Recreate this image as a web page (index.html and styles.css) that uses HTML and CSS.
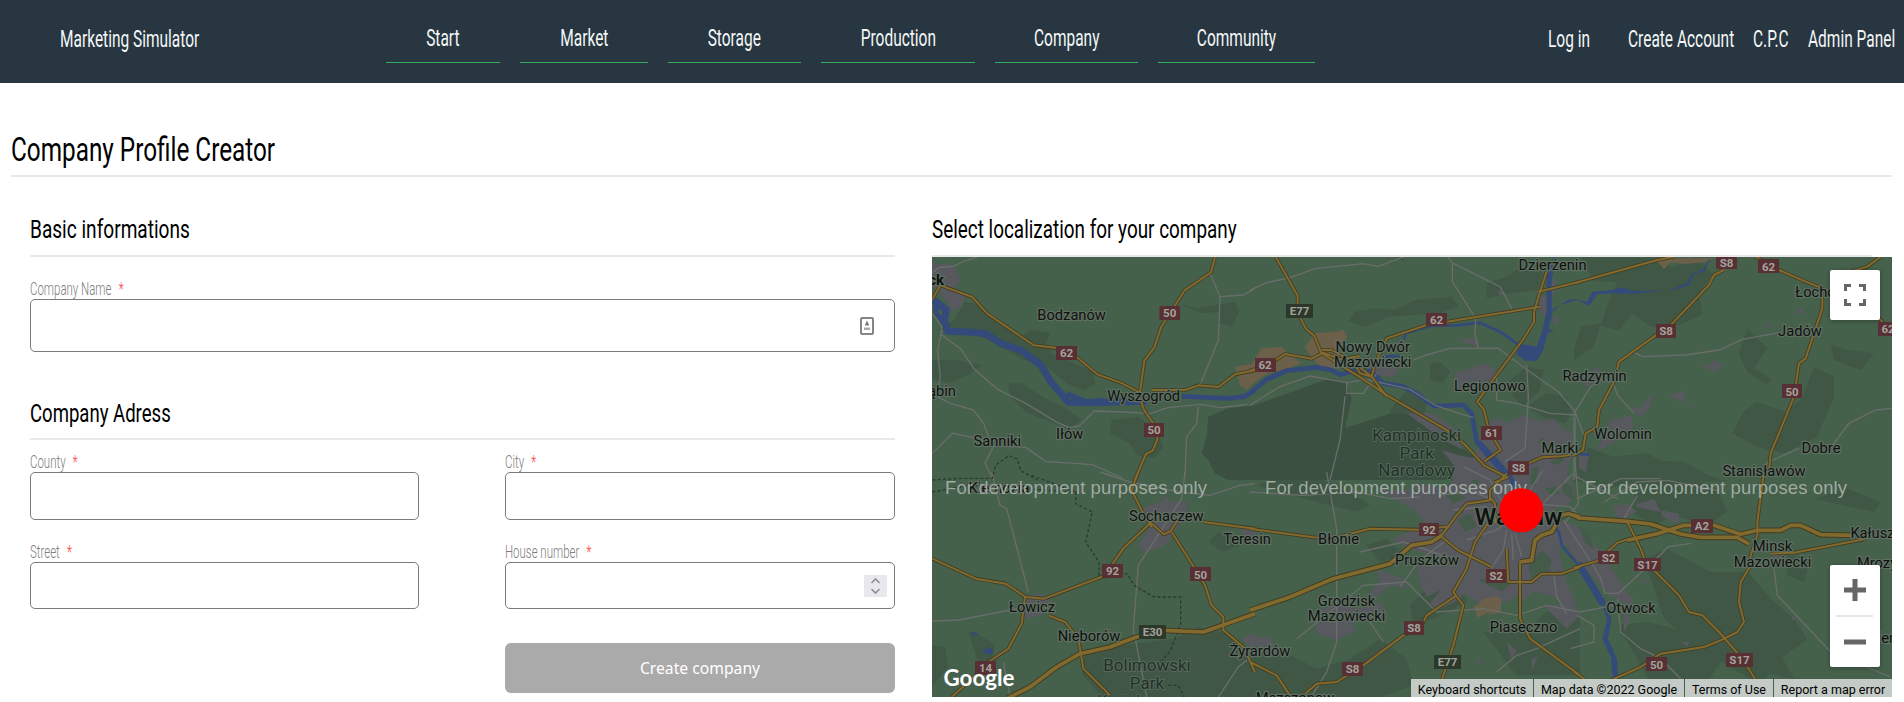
FILE: index.html
```html
<!DOCTYPE html>
<html lang="en">
<head>
<meta charset="utf-8">
<title>Marketing Simulator</title>
<link rel="stylesheet" href="styles.css">
</head>
<body>
<header class="topbar">
  <a class="brand"><span class="cond">Marketing Simulator</span></a>
  <nav class="menu">
    <a class="menu-link start"><span class="cond">Start</span></a>
    <a class="menu-link market"><span class="cond">Market</span></a>
    <a class="menu-link storage"><span class="cond">Storage</span></a>
    <a class="menu-link production"><span class="cond">Production</span></a>
    <a class="menu-link company"><span class="cond">Company</span></a>
    <a class="menu-link community"><span class="cond">Community</span></a>
  </nav>
  <div class="account">
    <a class="login"><span class="cond">Log in</span></a>
    <a class="register"><span class="cond">Create Account</span></a>
    <a class="cpc"><span class="cond">C.P.C</span></a>
    <a class="admin"><span class="cond">Admin Panel</span></a>
  </div>
</header>
<main class="page">
  <h1 class="title"><span class="cond">Company Profile Creator</span></h1>
  <div class="columns">
    <form class="form">
      <h2 class="section"><span class="cond">Basic informations</span></h2>
      <div class="field name-field">
        <label><span class="cond">Company Name<b>*</b></span></label>
        <div class="input tall">
          <svg class="card-icon" width="16" height="20" viewBox="0 0 16 20"><rect x="2" y="2" width="12" height="16" rx="1" fill="#fff" stroke="#858585" stroke-width="2"/><path d="M8 4.500l1.200 2.500 1 2.600H5.800l1-2.600z" fill="#777"/><path d="M5 11.500h6v2.500H5z" fill="#aaa"/></svg>
        </div>
      </div>
      <h2 class="section address"><span class="cond">Company Adress</span></h2>
      <div class="grid">
        <div class="field"><label><span class="cond">County<b>*</b></span></label><div class="input"></div></div>
        <div class="field"><label><span class="cond">City<b>*</b></span></label><div class="input"></div></div>
        <div class="field"><label><span class="cond">Street<b>*</b></span></label><div class="input short"></div></div>
        <div class="field"><label><span class="cond">House number<b>*</b></span></label><div class="input short">
          <svg class="spinner" width="23" height="22" viewBox="0 0 23 22"><path d="M0 0h23v22H0z" fill="#e9e9ed"/><path d="M7.500 8l4-4 4 4M7.500 14l4 4 4-4" fill="none" stroke="#8f8f9d" stroke-width="1.600"/></svg>
        </div></div>
      </div>
      <button class="submit" type="button">Create company</button>
    </form>
    <section class="place">
      <h2 class="section map-head"><span class="cond">Select localization for your company</span></h2>
      <div class="map">
        <svg class="canvas" width="960" height="440" viewBox="932 257 960 440">
          <rect x="932" y="257" width="960" height="440" fill="#45604b"/>
          <g class="forest">
            <path class="ta" d="M120 155l50 10 10 25 70 45 40 22 30-18 57 9-15 35 20 30 60 25 60 25 10 40-35 18-50-20-60-50-80-25-60-40-80-35-50-15-60 5 50-30zM760 160l60 15 110-20 12 30-20 45-40-10 5-35-60 5zM250 400l40 0 70 45 60 28 50 35-35 30-50-20-80-30-50-50zM560 510l80-10 60 45 15 50-30 30-50-10-20-35-60-30zM20 330l70 0 80 15-40 30-60 25-50-15z"/>
            <path class="tb" d="M290 220l25-35 60-10 60 5 60-30 110-10 20 30-60 20-150 10-70 30-50-15zM710 100l60-20 50-30 60 20-20 50-80 10-70 15zM540 340l30-5 30 30-20 35-40-10zM420 480l60-70 50 50-10 50-100 0zM440 20l25 0-5 15zM770 400l60-50 50 10-10 60-50 50-30-30z"/>
            <path class="tc" d="M20 22l225 0 50 30 70-30 50 50-40 60 10 60-60 30-90 10-60-40-40 50-55-15 20-60 30-70-70-5zM520 235l60 60-40 60 50 30-10 20-60-40-25-50zM770 285l50 15 80 10-40 50-80-30zM720 350l60 30 0 60-30 70-20 50-100 50-80-20-75-40 30-60 40-35 90 30 50-40zM20 600l70 60 120-30 120 5 70 40 60 20H0V590zM0 300l20-70 60-10-20 70-60 40z"/>
            <path class="td" d="M130 480l20 0 60 40-10 60-40-10-20-60zM20 520l40 5 10 60-50 60zM480 550l120-30 150-20 70-35 90 20 80 80v110H530l-60-70zM880 180l40 0 30 40-60 20-40-30z"/>
            <path class="te" d="M0 520l100 20 100 50 100-30 90-60 80 60 20 80-100 35H0zM480 400l60-60 90 0 20 50-100 50-60 10zM700 480l120 0 70-60 100 10v180H800zM20 40l110-40 140 40 90 60-40 20-120-30zM350 220l60-20 50 50-70 20z"/>
            <path class="tf" d="M190 20l130-20 110 50 30 70-60 40-100-30-60 30-70-40zM210 260l70-30 130 70 110 0 80 90 60 50 40 60-80 60-60 80-100-60-90-60-100-80zM130 460l90-10 120 30 100 90-40 60-170 0zM640 250l70 10-20 70-50-20zM720 80l100-30 100 40-20 30zM560 540l60 10 40 70-100-20z"/>
            <path class="tw" d="M380 80l60-40 60 10 15 50-20 30-60-15zM560 200l80 30 100-10 100 50v60l-100-30-140 30-40-40z"/>
          </g>
          <g class="park">
            <path class="ta" d="M850 500l60-25 80-8v223H910l-40-20-20-40-20-20 15-50z"/>
            <path class="tb" d="M0 470l100-35 140-50 45 10 20 50-20 90 60-20 80-25 60 5 60 30 90 65 70 60 40 40H0z"/>
          </g>
          <g class="urban">
            <path class="ta" d="M20 22l15 25 30-8 25 15 18 36-22 25 34 20-8 35-30 12-30-45-32-30z"/>
            <path class="tb" d="M615 370l90-30 40 25-10 40-65 20-60-10zM350 340l50 0 50 20-20 20-60-5zM740 120l30 10-20 10zM620 270l60-5 10 25-40-10zM870 140l22 0-5 60-20-15zM905 90l15-8-6 40-10 30zM910 190l20 15-20 25zM470 490l80 0 70 50 20 60-60-30z"/>
            <path class="tc" d="M10 390l60-40 20 30-50 30zM110 510l60-15 10 35-50 40-60 35 20-60zM170 475l30-5 40-45-10 40-30 40zM285 435l50-15-10 40zM380 345l30 0 5-15 35 15-30 20zM655 190l35-20-5 20zM575 220l20 5-15 10zM15 600l30 10-10 60-20-20zM330 465l50 3-30 0z"/>
            <path class="td" d="M650 110l50-20 90 0-10 50-20 20-20 30-25 35-60 15-15-20 40-65zM300 370l50-5 30 25-30 40-60 10zM710 70l25 15 5 30-20-10zM950 500l40-20v60zM940 170l50 0v25l-20 10z"/>
            <path class="te" d="M500 280l45-5-3 60-30 10zM390 330l-30 30 10 20 50-40 50 10-10-30-80-30zM190 420l60-20 80 10 60-20 20 35-60 20-50 10 20 20-60 30-60-20zM490 30l110 25-20 40-70-20zM770 510l30 25-15 30zM845 560l20-5-20 40zM680 560l15 10-15 10zM0 490l60 10 40 40-50 20zM880 400l90 0 20 30-40 40z"/>
            <path class="tf" d="M180 100l60-20 20 40-50-10zM260 115l55 10 0 30-50-20zM200 325l30-5-20 15zM150 410l20 30-20 40zM320 510l25 0-5 15zM590 240l30 0 0 35-20 0zM650 430l20 10-15 5z"/>
            <path class="tw" d="M255 130l40-15 25 15 55-25 50 20 35-10 30 30 25 10 5 50-20 70 25 60-20 40-40 10 0 30 60 20 60 60 45 60 50 80 25 25-20 15-60-30-45-55-60-60-25-40-20 20 25 100 30 60-30 20-40-40-60-15-30 30-20-15-40 20-25-15-50 15-40-30-20 20-60 30-25-20 35-45-40-45 10-50-80-30-40-20 60-30 40-20-30-40-70-35-40-25 100 0 60 10 60-30 10-50-40-50 50 15 45 10zM155 270l35-15 30 20-10 30-50-10zM640 380l40-10 30 25-40 25-20-10zM60 610l60-20 20 30-60 30z"/>
          </g>
          <g class="forest light">
            <path class="tw" d="M450 245l40-15 0 15-25 10zM485 300l30 20 5 40-30-20zM435 325l30-5 15 20-30 5zM395 265l20-5-10 60-15-10zM415 190l10-20 15 15zM130 340l40-5 30 20-40 15zM170 420l40-20 20 40-35 15zM385 560l40-50 30 30-10 40-50 20zM160 400l30-10 0 15zM215 300l25 0-15 20zM540 440l30 20 10 50-30-30zM235 600l60-10 40 15-30 30z"/>
          </g>
          <g class="quarry">
            <path class="ta" d="M930 350l60-10v55l-25 25-20-15z"/>
            <path class="tb" d="M0 350l35-55 60-5 20 20 40 30-40 15-60 15-55 35zM165 290l30-40 65-5 20-5 12 20-30 35 30 30-20 30-50 5-40-40z"/>
            <path class="tc" d="M240 25l180 0-30 12-60 5-40-5-20 20z"/>
            <path class="te" d="M672 405l30-25 40-8 12 10-2 40-30 5-10-5-30 15z"/>
          </g>
          <g class="water">
            <path class="tb" d="M800 280l60 10 18-50 12-60 0-100 20-58 10 0-15 66 0 110-10 40 18 4-20 8-15 54-18 28-35 0-25-20zM905 180l50-30 35-3-60 18-20 20z"/>
            <path class="tc" d="M0 148l40 7 15-30 60-5 25-8 35 10 100 0-100 9-50-1-55 2-10 15-15 20-30-15zM275 126l65-28 15-28 30-10 25-38-18 42-32 8-14 34z"/>
            <path class="td" d="M133 500l15-22 15 12-20 0zM170 540l20-15 15 10-5 14z"/>
            <path class="te" d="M435 228l25 8-20-5z"/>
            <path class="tf" d="M88 390l25 50-12 60 28 60 3 60H116l-5-65-26-55 15-60-18-45zM420 240l15 5zM680 560l20 12z"/>
          </g>
          <g class="river">
            <path class="ta" d="M26 150l38 30-6 30 10 34 60 2 55 5 45 30 60 20 60 45 30 50 52 60 60 2 175-4"/>
            <path class="ta narrow" d="M30 160l4 30 28 35M770 439l140 6 50-6 30-18M425 430l60 25 50-5"/>
            <path class="tb narrow" d="M0 430l50-42 60-26 90-10 45 8 25 14 50-14 45 5 35 35 60 10 40 20 50 38 90-3 25 25 15 85 50 60 45 45"/>
            <path class="tb thin" d="M460 270l8-20 72-22 80-2 70-8 60 27 50 35 45 15M400 320l50-2"/>
            <path class="tw narrow" d="M235 185l50 52 45 53 15 30"/>
            <path class="tw thin" d="M465 435l12 25 10 40 45 50M332 240v40M540 223h30"/>
            <path class="tw" d="M535 550l38 62 36 60"/>
          </g>
          <g class="minor">
            <path class="ta" d="M22 68l20-15 45-5 30-15 40-12M22 190l28 40-2 25-10 45 8 80-10 60 40 20 70 20 30 40 20 55M48 253l60 45 40 60 70 60 80 40 100 60 35 15 30-5 45-45 80 3 90 4 50-17 100-10 60 10 80-10M22 610l60-60 60 12 60 25 100 5 60 42 140 10 90 40M205 590l-25 50 25 50M855 70l30 70 70-5 35-20M885 140l-5 130-55 135M820 470l-5 50-30 40-5 120"/>
            <path class="tb" d="M0 120l50-22 70-15 75-27 145-15 45 8 80-30M595 22l12 18 0 55 70 110-2 50 10 40 60 0 80 60 100 70 50 60 30 80M610 40l140 70 35 65M490 330l40-15 70-20 85 0M0 465l90-55 90-32 110 20 60-10 130 30 80 50 60 20 50 15M830 345l5 100-10 150-60 40M290 400l0 30 50 0 40-60M285 440l-15 130-30 120M740 370l0 80 60 10 100 30 80 5"/>
            <path class="tc" d="M175 305l30 15 130-5 100-15 70-32 110-20M0 490l50-80 40-25 30 20 10 30 50 55M765 600l60-80 80-40 50-5M575 640l100-45M0 500v190"/>
            <path class="td" d="M200 0l25 100 20 10 65 250M22 447l80-3 180-35M525 0l90 30 150 30 90 10 90-30 45-5M780 0l-10 80-130 200-15 190 40 205M235 570l20 100M880 675l60-90 50-40"/>
            <path class="te" d="M0 60l160 10 160-10 100 20 90-5M230 0l30 170 0 340-30 90-50 80M330 240l130-30 90 30 50 20M140 500l200-160 130-10 90 90 140-10 100 20 90-30 100 20 100-20M360 450l40 60M740 600l60-50 60-20 130-60"/>
            <path class="tf" d="M0 10l130 70M10 80l130-60 120 0M90 90l100-60 90-5 150 30M10 430l50 30 0 50-70 20M130 380l10 100 60 50 60 30 60 60M600 290l10 80 160 170 180 75M150 140l40-70"/>
            <path class="tw" d="M525 110v130l10 130-40 60M120 345l100-10 70 30M160 390l100-10M200 480l90-30 40-30M270 570l40-60 10-60M340 540l-5-80M365 530l-20-70M330 410l-60-110-80-40M390 330l40-60M380 370l130 10 40 40M490 420l60 90 50 80 15 50 40 0 120-110 30-30 70-10M460 570l10 80 30 50M0 620l60-80 80-60M310 370l20-60M430 370l60-60 30-30"/>
          </g>
          <g class="border-line">
            <path class="ta" d="M22 690l80-5 30 0 70 0 10-40 40-28 25 10 10 35 50 28"/>
            <path class="td" d="M22 60l110-20 320 20 0 35 50 25-20 90 40 60 0 50 85-15 20 35 60 35 80 0 0 80-30 80-50 60M320 10l130 50M730 640l30 0 20 40"/>
          </g>
          <g class="roads" id="roads">
            <path class="ta" d="M22 148l24-42 96 35 45 50 140 95 100 12 90 75 70 25 58 30M870 22l-12 45-80 55-70 110-20 60-30 40-15 110 15 40 25 35 15 50-15 35-20 10-35 80M680 420l100 0 40-14 60 5 50-38 60-12"/>
            <path class="tb" d="M0 362l60-20 45-30 80 14 35-18 50 20 60-10M78 22l65 115 0 50 25 50 25 20 20 50 60 40 50 30 90 60 180 105 50 40 60 65 70 35-40 15M215 300l30 0 70 40 50 40 45 60M315 345l15 25 35 10 10-40 25-50 10-25 120-40 340-55M890 65l-20 60-18 60 0 30-30 50-90 120-50 70 20 25 15 60 35 60-50 35M990 95l-125 30M835 640l40-18 60-3 25-5"/>
            <path class="tc" d="M0 100l250-70 50-10M450 60l-30 15-15 30-110 115-160 115-15 60-45 85-5 50-35 20-8 50-32 18M545 20l70 40 80 35 50 20 0 60-50 150-20 15-15 100-70 170-5 55M770 110l60-45 50-15 40-30M900 190l54 55"/>
            <path class="td" d="M22 260l130 60 90 15 60 40 55 5 180-68 60-85 80-75 40 35 20-10 20-30M835 150l155 20M640 0l-20 55 30 60 30 50M740 180l70 110 30 50 20 60 35 35 0 40 60 50 35 75M300 375l-10 80-40 75-60 40-60 60-50 45M370 430l50 20 40 50 15 90 80 80"/>
            <path class="te" d="M0 170l190 26 60 2 110-28 150 3 90-10M575 195l50 40 40 20 60 30M770 5l-50 50 0 30-70 10-30 35-45 60M730 130l-55 80-25 80-40 70 30 40-30 120-40 120M620 370l-90 60-20 40-50 20-120 90-80 50-60 5-35 30M0 570l80 40 40 60M770 230l5 100 70 0 30-25 60 0 55-20M810 270l0 170 30 60 150 110M720 75l15 20 0 60"/>
            <path class="tf" d="M0 287l70-20 60-55 30-10M160 150l40 80 15 40 100 100 30 50 40 10 50 50 70 80 50 80 20 30M570 0l-20 150 0 40-20 60 0 30-30 50-5 60 15 60-20 30-50 25-50 20-130 20-60 40-90 40M0 600l30 20M590 245l70-3 210-40"/>
          </g>
          <g class="roads main" id="motorways">
            <path class="td" d="M245 680l70-35 80-60 70-40 90-20 80-30 80-20 120 5 70-25 85-30"/>
            <path class="te" d="M0 415l120-40 130-55 170-45 65-55 60-10 30-20M810 270l35-5 10-60 20-15 30-10 30-50 20-5 35 10"/>
            <path class="tf" d="M0 130l15 8 145 10 70 8 90 30 60 10 110 0 35 20M160 205l90-20 80-25 90 0 80 27 50-12 70 0 30-15 30 0 60 28 100 2"/>
          </g>
          <use href="#roads" class="core"/>
          <use href="#motorways" class="core wide"/>
          <g class="badges">
            <path class="red" d="M1159.500 306h20.500v14h-20.500zM1056 346h21v14h-21zM1144 423h20v14h-20zM1426 313h21v13h-21zM1255 358h21v14h-21zM1481 426h21v14h-21zM1508 461h21v14h-21zM1716 257h21v12h-21zM1758 259h21v14h-21zM1656 324h20v14h-20zM1878 322h20v14h-20zM1782 384h20v14h-20zM1102 564h21v14h-21zM1190 567h21v14h-21zM975 661h21v14h-21zM1419 523h20v13h-20zM1486 569h20v14h-20zM1404 621h20v14h-20zM1342 662h21v14h-21zM1691 519h22v14h-22zM1598 551h21v13h-21zM1634 558h27v13h-27zM1646 657h21v14h-21zM1726 653h27v14h-27z"/>
            <path class="dark" d="M1286 304h27v14h-27zM1139 625h27v14h-27zM1434 655h27v14h-27z"/>
            <text x="1169.700" y="317">50</text><text x="1066.500" y="357">62</text><text x="1154" y="434">50</text><text x="1299.500" y="315">E77</text><text x="1436.500" y="323.500">62</text><text x="1265" y="369">62</text><text x="1491.500" y="437">61</text><text x="1518.500" y="472">S8</text><text x="1726.500" y="266.500">S8</text><text x="1768.500" y="270.500">62</text><text x="1666" y="335">S8</text><text x="1888" y="333">62</text><text x="1792" y="395.500">50</text><text x="1112.500" y="575">92</text><text x="1200.500" y="578.500">50</text><text x="1152.500" y="636">E30</text><text x="985.500" y="672">14</text><text x="1429" y="533.500">92</text><text x="1496" y="580">S2</text><text x="1414" y="632">S8</text><text x="1352.500" y="673">S8</text><text x="1447.500" y="666">E77</text><text x="1702" y="530">A2</text><text x="1608.500" y="562">S2</text><text x="1647.500" y="569">S17</text><text x="1656.500" y="668.500">50</text><text x="1739.500" y="664">S17</text>
          </g>
          <g class="parks-text"><text x="1416.700" y="440.700">Kampinoski</text><text x="1416.700" y="458.500">Park</text><text x="1416.700" y="476">Narodowy</text><text x="1147" y="671">Bolimowski</text><text x="1147" y="689">Park</text><text x="1148" y="706.500">Krajobrazowy</text></g>
          <g class="towns">
            <text x="944" y="284.500" class="strong">Płock</text><text x="1071.600" y="319.500">Bodzanów</text><text x="1143.700" y="400.500">Wyszogród</text><text x="937" y="396">Gąbin</text><text x="997.300" y="446">Sanniki</text><text x="1069.700" y="439">Iłów</text><text x="1372.700" y="352">Nowy Dwór</text><text x="1372.700" y="366.700">Mazowiecki</text><text x="1552.500" y="270">Dzierżenin</text><text x="1490" y="391">Legionowo</text><text x="1560" y="453">Marki</text><text x="1594.500" y="381">Radzymin</text><text x="1623" y="439">Wolomin</text><text x="1821" y="297">Łochów</text><text x="1800" y="335.500">Jadów</text><text x="1821" y="453">Dobre</text><text x="1764" y="476">Stanisławów</text><text x="999" y="493">Kiernozia</text><text x="1166.300" y="521">Sochaczew</text><text x="1247" y="544">Teresin</text><text x="1032" y="612">Łowicz</text><text x="1089" y="640.500">Nieborów</text><text x="1260" y="655.500">Żyrardów</text><text x="1338.500" y="544">Błonie</text><text x="1427" y="565">Pruszków</text><text x="1346.500" y="606">Grodzisk</text><text x="1346.500" y="621">Mazowiecki</text><text x="1523.500" y="631.500">Piaseczno</text><text x="1295" y="702.500">Mszczonow</text><text x="1772.500" y="551">Minsk</text><text x="1772.500" y="566.500">Mazowiecki</text><text x="1880" y="538">Kałuszyn</text><text x="1877" y="568">Mrozy</text><text x="1631" y="613">Otwock</text><text x="1897" y="643">Jeruzal</text>
            <text x="1518.500" y="524.500" class="capital" textLength="88" lengthAdjust="spacingAndGlyphs">Warsaw</text>
          </g>
          <g class="watermark"><text x="945" y="494" textLength="262">For development purposes only</text><text x="1265" y="494" textLength="262">For development purposes only</text><text x="1585" y="494" textLength="262">For development purposes only</text></g>
          <circle cx="1521.300" cy="510.300" r="22" fill="#f00"/>
          <text class="logo" x="943.500" y="686" textLength="71" lengthAdjust="spacingAndGlyphs">Google</text>
        </svg>
        <div class="map-btn full"><svg width="22" height="22" viewBox="0 0 22 22"><path d="M1.500 7V1.500H7M15 1.500h5.500V7M20.500 15v5.500H15M7 20.500H1.500V15" fill="none" stroke="#666" stroke-width="3"/></svg></div>
        <div class="map-btn zoom"><svg width="50" height="102" viewBox="0 0 50 102"><path d="M14 25h22M25 14v22M14 77h22" stroke="#666" stroke-width="5"/><path d="M6 51h37" stroke="#e6e6e6" stroke-width="2"/></svg></div>
        <div class="credits"><span class="keys">Keyboard shortcuts</span><span class="data">Map data ©2022 Google</span><span class="terms">Terms of Use</span><span class="report">Report a map error</span></div>
      </div>
    </section>
  </div>
</main>
</body>
</html>
```
FILE: styles.css
```css
* { box-sizing: border-box; }
body { margin: 0; height: 702px; overflow: hidden; background: #fff; font-family: Roboto, "Open Sans", sans-serif; color: #000; }

/* condensed lettering */
.cond { display: inline-block; white-space: nowrap; transform: scaleX(.645); transform-origin: left center; }

.topbar { display: flex; height: 83px; background: #273641; color: #f4f6f7; font-size: 24px; font-weight: 400; line-height: 30px; }
.brand { width: 326px; margin-left: 60px; padding-top: 24px; }
.menu { display: flex; gap: 20px; height: 63px; }
.menu-link { display: flex; justify-content: center; padding-top: 23px; border-bottom: 1px solid #35ac5f; }
.menu-link .cond { transform-origin: center; }
.start { width: 114px; }
.market { width: 128px; }
.storage { width: 133px; }
.production { width: 154px; }
.company { width: 143px; }
.community { width: 157px; }
.account { display: flex; margin-left: 233px; padding-top: 24px; }
.login { width: 80px; }
.register { width: 125px; }
.cpc { width: 55px; }
.admin { width: 84px; }

.page { padding: 0 12px 0 11px; }
h1, h2 { margin: 0; font-weight: 400; }
.title { height: 94px; padding-top: 46px; border-bottom: 2px solid #e9e9e9; font-size: 34px; line-height: 40px; }
.title .cond { transform: scaleX(.715); }
.columns { display: flex; justify-content: space-between; padding-left: 19px; }
.form { width: 865px; }
.section { height: 80px; padding-top: 35px; border-bottom: 2px solid #e9e9eb; font-size: 26.5px; line-height: 34px; }
.section .cond { transform: scaleX(.72); }
.address { height: 88px; padding-top: 44px; }
.address .cond { transform: scaleX(.7); }
.field label { display: block; height: 22px; padding-top: 1px; color: #7d7d7d; font-size: 17.5px; font-weight: 300; line-height: 22px; }
.field .cond { transform: scaleX(.655); }
.field b { margin-left: 11px; color: #f44; font-weight: 300; }
.name-field { padding-top: 20px; }
.input { display: flex; align-items: center; justify-content: flex-end; height: 48px; border: 1px solid #7b7b7b; border-radius: 5px; }
.tall { height: 53px; padding-right: 19px; }
.short { height: 47px; padding-right: 7px; }
.grid { display: grid; grid-template-columns: 389px 390px; justify-content: space-between; row-gap: 20px; padding-top: 10px; }
.submit { display: block; width: 390px; height: 50px; margin: 34px 0 0 auto; border: 0; border-radius: 6px; background: #aaa; color: #fff; font: 15.7px "Noto Sans", sans-serif; }

.place { width: 960px; }
.map-head { width: 940px; }
.map-head .cond { transform: scaleX(.713); }
.map { position: relative; height: 440px; overflow: hidden; }
.canvas { display: block; }
.ta { transform: translate(925px, 250px) scale(.33333); }
.tb { transform: translate(1250px, 250px) scale(.33333); }
.tc { transform: translate(1574px, 250px) scale(.33333); }
.td { transform: translate(925px, 472px) scale(.33333); }
.te { transform: translate(1250px, 472px) scale(.33333); }
.tf { transform: translate(1574px, 472px) scale(.33333); }
.tw { transform: translate(1400px, 380px) scale(.33333); }
.forest { fill: #405745; }
.light { fill: #435b48; }
.park { fill: #3b5040; }
.urban { fill: #57595f; }
.quarry { fill: #6d604b; }
.water { fill: #334a7a; }
.river { fill: none; stroke: #334a7a; stroke-width: 21; stroke-linejoin: round; }
.narrow { stroke-width: 14; }
.thin { stroke-width: 8; }
.minor { fill: none; stroke: #6a6e6b; stroke-width: 4; }
.border-line { fill: none; stroke: #2a3a2d; stroke-width: 4; stroke-dasharray: 9 7; }

/* roads: dark casing first, then the lighter core reuses the same paths */
.canvas { --road: #423d22; --road-width: 11; --main-width: 17; }
.core { --road: #826a2f; --road-width: 6; --main-width: 11; }
.roads { fill: none; stroke-linejoin: round; }
.roads path { stroke: var(--road); stroke-width: var(--road-width); }
.main path { stroke-width: var(--main-width); }

.badges .red { fill: #582f33; }
.badges .dark { fill: #2c3829; }
.badges text { fill: #a3a39d; font-size: 11.5px; font-weight: 700; text-anchor: middle; }
.towns text, .parks-text text { text-anchor: middle; paint-order: stroke; stroke: #5f7062; stroke-width: 2.5px; stroke-linejoin: round; }
.towns text { fill: #101110; font-size: 14.7px; }
.towns .strong { font-size: 15px; font-weight: 700; text-anchor: end; }
.towns .capital { font-size: 23px; font-weight: 500; }
.parks-text text { fill: #1f3226; stroke: #58695c; stroke-width: 2px; font-size: 17px; }
.watermark { fill: #b1bbb3; fill-opacity: .85; font-family: "Liberation Sans", Arial, sans-serif; font-size: 18.5px; }
.logo { fill: #fff; stroke: #4b5b50; stroke-width: 1px; paint-order: stroke; font-family: Lato, sans-serif; font-size: 23px; font-weight: 700; }
.map-btn { position: absolute; right: 12px; width: 50px; border-radius: 2px; background: #fff; box-shadow: 0 1px 4px rgba(0, 0, 0, .3); }
.full { top: 13px; height: 50px; padding: 14px; }
.full svg, .zoom svg { display: block; }
.zoom { top: 308px; height: 102px; }
.credits { position: absolute; right: 0; bottom: 0; display: flex; gap: 1px; height: 18px; font-size: 12.5px; line-height: 21px; text-align: center; white-space: nowrap; }
.credits span { background: #c4cbc6; }
.keys { width: 122px; }
.data { width: 150px; }
.terms { width: 88px; }
.report { width: 118px; }
```
